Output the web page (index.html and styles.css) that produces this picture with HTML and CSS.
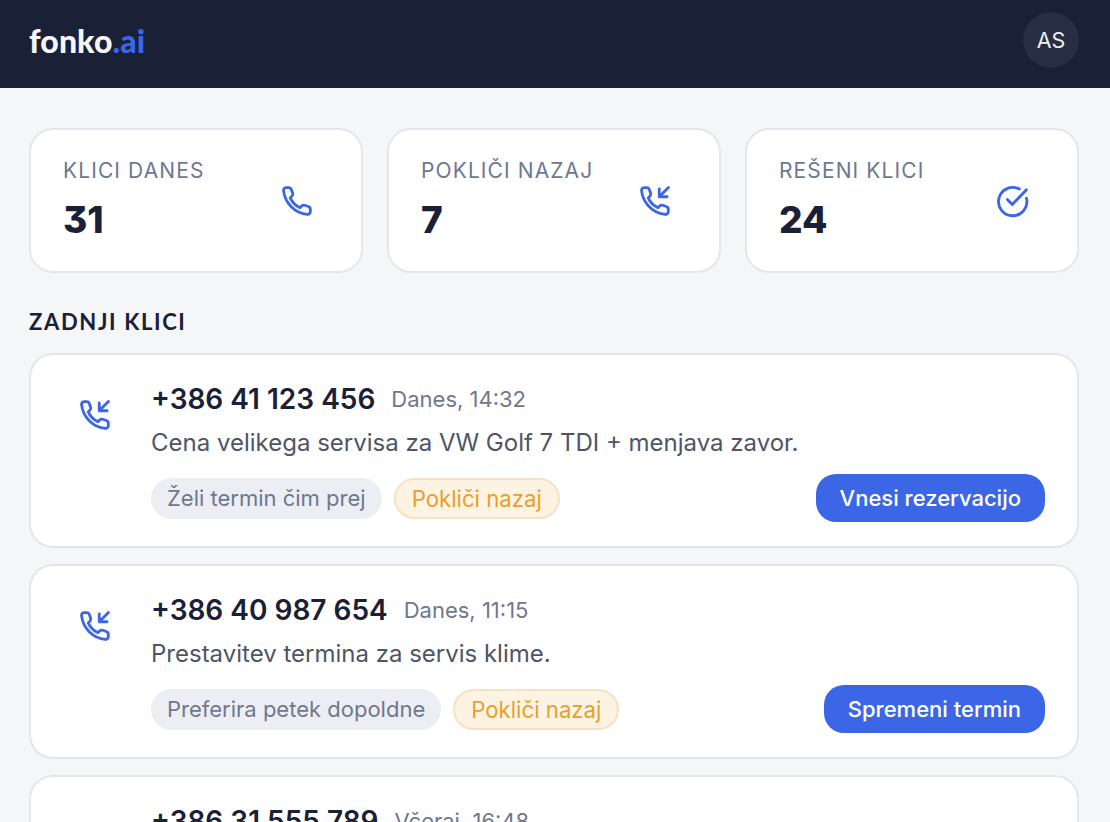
FILE: index.html
```html
<!DOCTYPE html>
<html lang="sl">
<head>
<meta charset="utf-8">
<title>fonko.ai</title>
<link rel="stylesheet" href="styles.css">
</head>
<body>
<svg class="sprite" width="0" height="0" aria-hidden="true">
  <symbol id="phone" viewBox="0 0 24 24"><path d="M4.5 2.5h1.6a2 2 0 0 1 1.9 1.4l.9 2.6a2 2 0 0 1-.5 2.1l-1.2 1.2a14 14 0 0 0 6.9 6.9l1.2-1.2a2 2 0 0 1 2.1-.5l2.6.9a2 2 0 0 1 1.4 1.9v1.6a2 2 0 0 1-2 2.1A19 19 0 0 1 2.5 4.5a2 2 0 0 1 2-2z"/></symbol>
  <symbol id="incoming" viewBox="0 0 24 24"><path d="M4.5 2.5h1.6a2 2 0 0 1 1.9 1.4l.9 2.6a2 2 0 0 1-.5 2.1l-1.2 1.2a14 14 0 0 0 6.9 6.9l1.2-1.2a2 2 0 0 1 2.1-.5l2.6.9a2 2 0 0 1 1.4 1.9v1.6a2 2 0 0 1-2 2.1A19 19 0 0 1 2.5 4.5a2 2 0 0 1 2-2z"/><path d="M21.5 2.5 15 9M15 3.5V9h5.5"/></symbol>
  <symbol id="check" viewBox="0 0 24 24"><path d="M21.5 10a10 10 0 1 1-5-6.4"/><path d="m8 11 3.5 3.5L21.5 4"/></symbol>
</svg>
<header class="topbar">
  <div class="logo">fonko<span class="logo-accent">.ai</span></div>
  <div class="avatar">AS</div>
</header>
<main class="content">
  <section class="stats">
    <article class="stat">
      <div class="stat-text"><div class="stat-label">KLICI DANES</div><div class="stat-value">31</div></div>
      <svg class="icon"><use href="#phone"/></svg>
    </article>
    <article class="stat">
      <div class="stat-text"><div class="stat-label">POKLIČI NAZAJ</div><div class="stat-value">7</div></div>
      <svg class="icon"><use href="#incoming"/></svg>
    </article>
    <article class="stat">
      <div class="stat-text"><div class="stat-label">REŠENI KLICI</div><div class="stat-value">24</div></div>
      <svg class="icon"><use href="#check"/></svg>
    </article>
  </section>
  <h2 class="section-title">ZADNJI KLICI</h2>
  <section class="calls">
    <article class="call">
      <svg class="icon call-icon"><use href="#incoming"/></svg>
      <div class="call-body">
        <div class="call-head"><span class="call-number">+386 41 123 456</span><span class="call-time">Danes, 14:32</span></div>
        <p class="call-desc">Cena velikega servisa za VW Golf 7 TDI + menjava zavor.</p>
        <div class="call-foot">
          <span class="tag">Želi termin čim prej</span>
          <span class="tag tag-warn">Pokliči nazaj</span>
          <button class="action">Vnesi rezervacijo</button>
        </div>
      </div>
    </article>
    <article class="call">
      <svg class="icon call-icon"><use href="#incoming"/></svg>
      <div class="call-body">
        <div class="call-head"><span class="call-number">+386 40 987 654</span><span class="call-time">Danes, 11:15</span></div>
        <p class="call-desc">Prestavitev termina za servis klime.</p>
        <div class="call-foot">
          <span class="tag">Preferira petek dopoldne</span>
          <span class="tag tag-warn">Pokliči nazaj</span>
          <button class="action">Spremeni termin</button>
        </div>
      </div>
    </article>
    <article class="call">
      <svg class="icon call-icon"><use href="#phone"/></svg>
      <div class="call-body">
        <div class="call-head"><span class="call-number">+386 31 555 789</span><span class="call-time">Včeraj, 16:48</span></div>
      </div>
    </article>
  </section>
</main>
</body>
</html>
```
FILE: styles.css
```css
* { box-sizing: border-box; }
html, body { height: 100%; }
body {
  margin: 0;
  height: 822px;
  overflow: hidden;
  background: #f5f6f8;
  color: #1a2035;
  font-family: Inter, "Liberation Sans", sans-serif;
}
.sprite { position: absolute; }
.topbar {
  height: 88px;
  background: #1a2035;
  display: flex;
  align-items: center;
  justify-content: space-between;
  padding: 0 31px 8px 29px;
}
.logo {
  font-family: Lato, sans-serif;
  font-weight: 900;
  font-size: 32px;
  letter-spacing: 0.1px;
  color: #f5f6f8;
}
.logo-accent { color: #3b66e6; }
.avatar {
  width: 56px;
  height: 56px;
  border-radius: 50%;
  background: #272d42;
  color: #eceef2;
  display: flex;
  align-items: center;
  justify-content: center;
  font-size: 21.5px;
  font-weight: 400;
}
.content { padding: 40px 31px 0 29px; }
.stats {
  display: grid;
  grid-template-columns: repeat(3, 1fr);
  gap: 24px;
}
.stat {
  height: 145px;
  background: #fff;
  border: 2px solid #e4e6ec;
  border-radius: 24px;
  padding: 26px 32px 0;
  display: flex;
  justify-content: space-between;
}
.stat-label {
  font-size: 21px;
  line-height: 30px;
  letter-spacing: 1.1px;
  color: #6e788f;
}
.stat-value {
  font-weight: 800;
  font-size: 37px;
  line-height: 48px;
  margin-top: 10px;
  font-feature-settings: "cv09";
}
.icon {
  width: 34px;
  height: 34px;
  fill: none;
  stroke: #3b66e6;
  stroke-width: 2;
  stroke-linecap: round;
  stroke-linejoin: round;
  flex: none;
}
.stat .icon { margin: 28px 15px 0 0; }
.section-title {
  margin: 35px 0 17px;
  font-family: Lato, sans-serif;
  font-weight: 700;
  font-size: 22px;
  line-height: 28px;
  letter-spacing: 1.65px;
}
.calls { display: flex; flex-direction: column; gap: 16px; }
.call {
  background: #fff;
  border: 2px solid #e4e6ec;
  border-radius: 24px;
  padding: 26px 32px 24px 47px;
  display: flex;
  gap: 39px;
  min-height: 195px;
}
.call-icon { margin-top: 17px; }
.call-body { flex: 1; min-width: 0; }
.call-head { display: flex; align-items: center; gap: 16px; }
.call-number { font-size: 28px; line-height: 36px; font-weight: 600; }
.call-time { font-size: 22px; line-height: 36px; color: #6e788f; }
.call-desc { margin: 10px 0 0; font-size: 24px; line-height: 32px; color: #4f5566; }
.call-foot { display: flex; align-items: center; gap: 12px; margin-top: 15px; }
.tag {
  height: 41px;
  padding: 0 16px;
  border-radius: 21px;
  background: #edeef3;
  color: #6e788f;
  font-size: 22px;
  display: flex;
  align-items: center;
}
.tag-warn {
  background: #fdf3e2;
  border: 2px solid #f6e2c0;
  color: #e89f2e;
  font-size: 22.2px;
}
.action {
  margin-left: auto;
  height: 48px;
  padding: 0 24px;
  border: 0;
  border-radius: 20px;
  background: #3b66e6;
  color: #fff;
  font: 500 22px Inter, sans-serif;
}
```
